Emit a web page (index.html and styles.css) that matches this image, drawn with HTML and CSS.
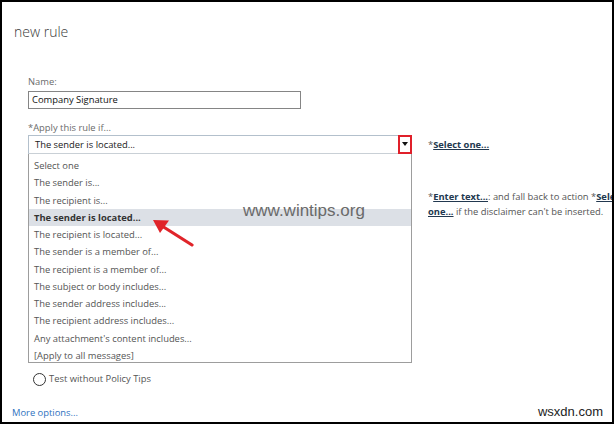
FILE: index.html
```html
<!DOCTYPE html>
<html>
<head>
<link rel="stylesheet" href="styles.css">
</head>
<body>
<div class="frame">
  <h1 class="title">new rule</h1>
  <div class="form">
    <label class="label">Name:</label>
    <div class="input">Company Signature</div>
    <label class="label label-apply">*Apply this rule if...</label>
    <div class="select">
      <span class="select-value">The sender is located...</span>
      <span class="select-btn"><svg viewBox="0 0 6 4" width="6" height="4"><path d="M0 0H6L3 4Z" fill="#111"/></svg></span>
    </div>
    <div class="note"><span class="star">*</span><a class="note-link">Select one...</a></div>
    <ul class="list">
      <li>Select one</li>
      <li>The sender is...</li>
      <li>The recipient is...</li>
      <li class="active">The sender is located...</li>
      <li>The recipient is located...</li>
      <li>The sender is a member of...</li>
      <li>The recipient is a member of...</li>
      <li>The subject or body includes...</li>
      <li>The sender address includes...</li>
      <li>The recipient address includes...</li>
      <li>Any attachment's content includes...</li>
      <li>[Apply to all messages]</li>
    </ul>
    <div class="note note-text">
      <span class="note-line"><span class="star">*</span><a class="note-link">Enter text...</a>: and fall back to action <span class="star">*</span><a class="note-link">Select</a></span>
      <span class="note-line"><a class="note-link">one...</a> if the disclaimer can't be inserted.</span>
    </div>
    <div class="radio"><span class="radio-dot"></span>Test without Policy Tips</div>
  </div>
  <a class="more">More options...</a>

  <div class="watermark">www.wintips.org</div>
  <svg class="pointer" width="50" height="36" viewBox="0 0 50 36">
    <line x1="42" y1="34" x2="12" y2="15" stroke="#e0242a" stroke-width="3.2" stroke-linecap="round"/>
    <path d="M3 9L19 9.5L10 22Z" fill="#e0242a"/>
  </svg>
  <div class="stamp">wsxdn.com</div>
</div>
</body>
</html>
```

FILE: styles.css
```css
body { margin: 0; background: #fff; }
.frame { width: 614px; height: 424px; box-sizing: border-box; border: 2px solid #000; position: relative; overflow: hidden; background: #fff; font-family: "Open Sans", "Noto Sans", sans-serif; font-size: 9.4px; color: #444; display: flex; flex-direction: column; }
.title { margin: 21px 0 0 12px; font-size: 14px; line-height: 18px; font-weight: 300; color: #3a3a3a; }
.form { display: grid; grid-template-columns: 384px 200px; column-gap: 16px; margin: 33px 0 0 26px; }
.label { grid-column: 1; display: block; line-height: 15px; color: #6b6b6b; margin-bottom: 2px; }
.label-apply { margin: 11px 0 0; }
.input { grid-column: 1; width: 273px; height: 18px; box-sizing: border-box; border: 1px solid #858585; padding: 0 3px; line-height: 16px; color: #111; }
.select { grid-column: 1; height: 19px; box-sizing: border-box; border: 1px solid #b3c0cc; border-bottom-color: #c9d0d6; display: flex; align-items: center; justify-content: space-between; color: #222; }
.select-value { padding-left: 6px; line-height: 17px; }
.select-btn { width: 14px; height: 19px; margin: -1px -1px 0 0; box-sizing: border-box; border: 2px solid #e0202a; display: flex; align-items: center; justify-content: center; }
.note { grid-column: 2; line-height: 19px; color: #555; white-space: nowrap; }
.star { color: #555; }
.note-link { font-weight: 700; color: #22384f; text-decoration: underline; }
.list { grid-column: 1; margin: 0; padding: 3px 0 0; list-style: none; height: 209px; box-sizing: border-box; border: 1px solid #9d9d9d; border-top: 0; overflow: hidden; }
.list li { height: 17.27px; line-height: 17.27px; padding-left: 5px; color: #555; }
.list li.active { background: #dce0e6; font-weight: 700; color: #333; }
.note-text { align-self: start; margin-top: 36px; line-height: 14.5px; }
.note-line { display: block; }
.radio { grid-column: 1; display: flex; align-items: center; margin: 9px 0 0 5px; line-height: 14px; color: #555; }
.radio-dot { width: 13px; height: 13px; box-sizing: border-box; border: 1.5px solid #333; border-radius: 50%; margin-right: 3px; }
.more { margin: 19px 0 0 10px; line-height: 15px; color: #2f72c0; }
.watermark { position: absolute; left: 241px; top: 199px; font-family: "Liberation Sans", Arial, sans-serif; font-size: 17px; line-height: 20px; color: #6a6a6a; }
.pointer { position: absolute; left: 148px; top: 209px; }
.stamp { position: absolute; right: 9px; bottom: 3px; font-family: "Liberation Sans", Arial, sans-serif; font-size: 13px; line-height: 15px; color: #222; }
```
